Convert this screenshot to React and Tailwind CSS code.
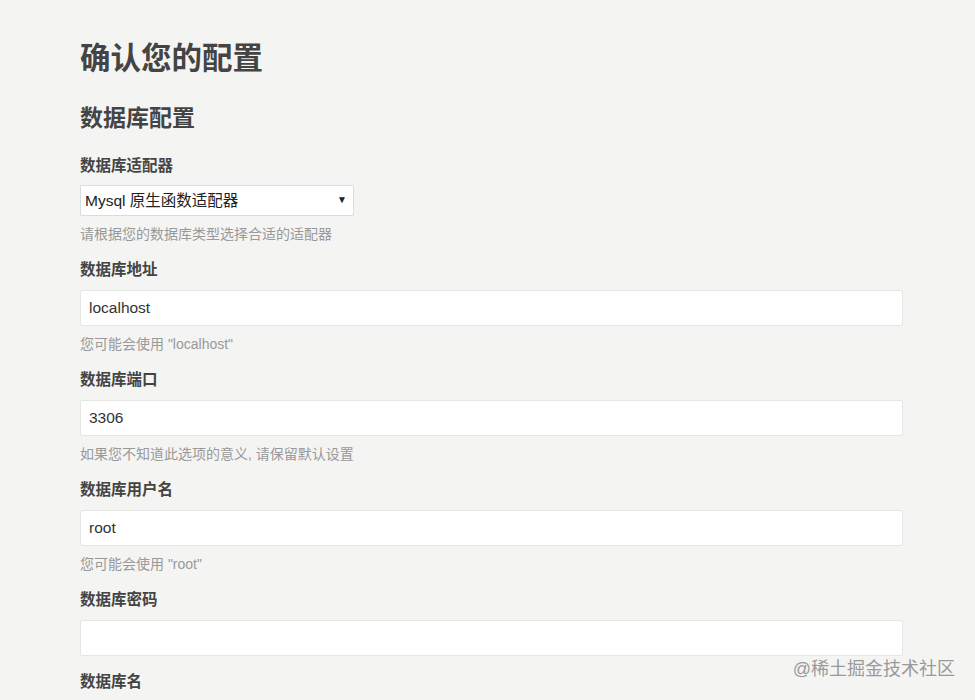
import React from 'react';

const font = { fontFamily: '"Liberation Sans", "Noto Sans CJK SC", sans-serif' };

function Field({ label, value, hint, last }) {
    return (
        <div className={last ? '' : 'mb-[16px]'}>
            <label className="block text-[15.5px] leading-[20px] font-bold text-[#444]">{label}</label>
            <input
                type="text"
                defaultValue={value}
                className="mt-[10px] block w-[823px] h-[36px] px-[8px] bg-white border border-[#e6e6e4] rounded-[2px] text-[15.5px] text-[#333] outline-none"
            />
            {hint && <p className="mt-[8px] text-[14px] leading-[20px] text-[#999]">{hint}</p>}
        </div>
    );
}

function App() {
    return (
        <div className="relative h-screen overflow-hidden bg-[#f4f4f3]" style={font}>
            <div className="pl-[80px] pt-[38px]">
                <h1 className="text-[30.5px] leading-[40px] font-bold text-[#444]">确认您的配置</h1>
                <h2 className="mt-[25px] text-[23px] leading-[30px] font-bold text-[#444]">数据库配置</h2>

                <div className="mt-[23px] mb-[16px]">
                    <label className="block text-[15.5px] leading-[20px] font-bold text-[#444]">数据库适配器</label>
                    <div className="relative mt-[9px] w-[274px]">
                        <select className="block w-full h-[31px] pl-[4px] pr-[24px] appearance-none bg-white border border-[#dcdcda] rounded-[1px] text-[15.5px] text-[#222] outline-none">
                            <option>Mysql 原生函数适配器</option>
                            <option>Pdo 驱动 Mysql 适配器</option>
                        </select>
                        <span className="pointer-events-none absolute right-[7px] top-[8px] text-[10px] leading-[14px] text-[#222]">▼</span>
                    </div>
                    <p className="mt-[8px] text-[14px] leading-[20px] text-[#999]">请根据您的数据库类型选择合适的适配器</p>
                </div>

                <Field label="数据库地址" value="localhost" hint={'您可能会使用 "localhost"'} />
                <Field label="数据库端口" value="3306" hint="如果您不知道此选项的意义, 请保留默认设置" />
                <Field label="数据库用户名" value="root" hint={'您可能会使用 "root"'} />
                <Field label="数据库密码" value="" />
                <Field label="数据库名" value="" last />
            </div>

            <div className="absolute right-[20px] bottom-[21px] text-[18px] leading-[20px] text-[#9a9a9a]">@稀土掘金技术社区</div>
        </div>
    );
}

export default App;
